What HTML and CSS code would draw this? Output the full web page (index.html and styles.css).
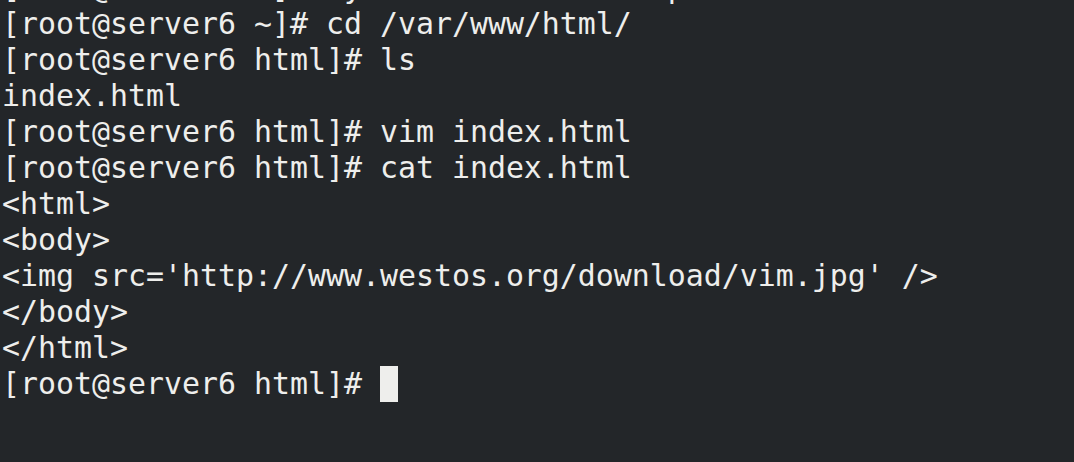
FILE: index.html
```html
<!DOCTYPE html>
<html>
<head>
<meta charset="utf-8">
<link rel="stylesheet" href="styles.css">
</head>
<body>
<div class="term">
<div class="line cut">[root@server6 ~]# systemctl start httpd</div>
<div class="line">[root@server6 ~]# cd /var/www/html/</div>
<div class="line">[root@server6 html]# ls</div>
<div class="line">index.html</div>
<div class="line">[root@server6 html]# vim index.html</div>
<div class="line">[root@server6 html]# cat index.html</div>
<div class="line">&lt;html&gt;</div>
<div class="line">&lt;body&gt;</div>
<div class="line">&lt;img src='http://www.westos.org/download/vim.jpg' /&gt;</div>
<div class="line">&lt;/body&gt;</div>
<div class="line">&lt;/html&gt;</div>
<div class="line">[root@server6 html]# <span class="cursor"></span></div>
</div>
</body>
</html>
```
FILE: styles.css
```css
html, body {
  margin: 0;
  padding: 0;
  background: #232629;
  height: 100%;
  overflow: hidden;
}
.term {
  padding-left: 2px;
  font-family: "DejaVu Sans Mono", monospace;
  font-size: 29.9px;
  line-height: 36px;
  color: #eeeeec;
}
.line {
  height: 36px;
  white-space: pre;
}
.cut {
  margin-top: -30px;
}
.cursor {
  display: inline-block;
  width: 18px;
  height: 36px;
  vertical-align: top;
  background: #eeeeec;
}
```
